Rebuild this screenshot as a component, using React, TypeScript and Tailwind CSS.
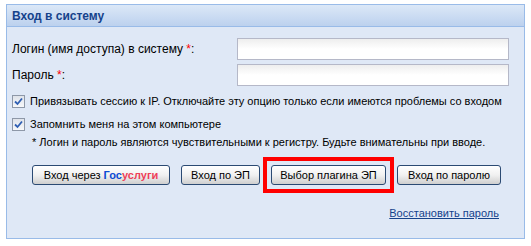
import { ReactNode } from 'react';

function CheckMark() {
    return (
        <span className="flex h-[13px] w-[13px] shrink-0 items-center justify-center border border-[#8e98a8] bg-gradient-to-b from-[#dfe3ea] to-[#f7f8fa]">
            <svg width="9" height="9" viewBox="0 0 9 9">
                <path d="M1 4.5 L3.5 7 L8 1.5" fill="none" stroke="#2f5fb3" strokeWidth="1.8" />
            </svg>
        </span>
    );
}

function Field({ label }: { label: ReactNode }) {
    return (
        <div className="flex h-[22px] items-center">
            <div className="w-[225px] text-[12px] text-black">{label}</div>
            <input
                type="text"
                className="h-[22px] w-[272px] border border-[#b5b8c8] bg-gradient-to-b from-[#eeeeee] via-white to-white px-1 outline-none"
            />
        </div>
    );
}

function Btn({ children, className = '' }: { children: ReactNode; className?: string }) {
    return (
        <button
            className={`h-[20px] rounded-[3px] border border-[#2b4a73] bg-gradient-to-b from-white via-[#f1f1f1] to-[#cfcfcf] text-[11px] leading-none text-black ${className}`}
        >
            {children}
        </button>
    );
}

export default function App() {
    return (
        <div className="h-[246px] w-[531px] bg-white pl-[6px] pt-[4px] font-['Liberation_Sans',Arial,sans-serif]">
            <div className="flex h-[235px] w-[519px] flex-col border border-[#99bbe8] bg-[#dfe8f6]">
                <div className="flex h-[22px] items-center border-b border-[#99bbe8] bg-gradient-to-b from-[#dce8f7] to-[#bcd1ee] pl-[5px] text-[12px] font-bold text-[#15428b]">
                    Вход в систему
                </div>
                <div className="flex flex-1 flex-col px-[5px] pt-[11px]">
                    <div className="flex flex-col gap-[4px]">
                        <Field label={<>Логин (имя доступа) в систему <span className="text-[#f00]">*</span>:</>} />
                        <Field label={<>Пароль <span className="text-[#f00]">*</span>:</>} />
                    </div>
                    <div className="mt-[7px] flex h-[17px] items-center gap-[5px] whitespace-nowrap text-[11px]">
                        <CheckMark />
                        <span>Привязывать сессию к IP. Отключайте эту опцию только если имеются проблемы со входом</span>
                    </div>
                    <div className="mt-[6px] flex h-[17px] items-center gap-[5px] whitespace-nowrap text-[11px]">
                        <CheckMark />
                        <span>Запомнить меня на этом компьютере</span>
                    </div>
                    <div className="flex h-[19px] items-center whitespace-nowrap pl-[20px] text-[11px]">
                        * Логин и пароль являются чувствительными к регистру. Будьте внимательны при вводе.
                    </div>
                    <div className="mt-[13px] flex justify-center gap-[11px] pl-[2px]">
                        <Btn className="w-[138px]">
                            Вход через <b className="text-[#0d4cd3]">Гос</b><b className="text-[#ee3f58]">услуги</b>
                        </Btn>
                        <Btn className="w-[79px]">Вход по ЭП</Btn>
                        <span className="relative flex">
                            <Btn className="w-[115px]">Выбор плагина ЭП</Btn>
                            <span className="pointer-events-none absolute -inset-[8px] border-4 border-[#f00]" />
                        </span>
                        <Btn className="w-[104px]">Вход по паролю</Btn>
                    </div>
                    <div className="mt-[20px] flex justify-end pr-[20px]">
                        <a href="#" className="text-[11px] text-[#15428b] underline">Восстановить пароль</a>
                    </div>
                </div>
            </div>
        </div>
    );
}
